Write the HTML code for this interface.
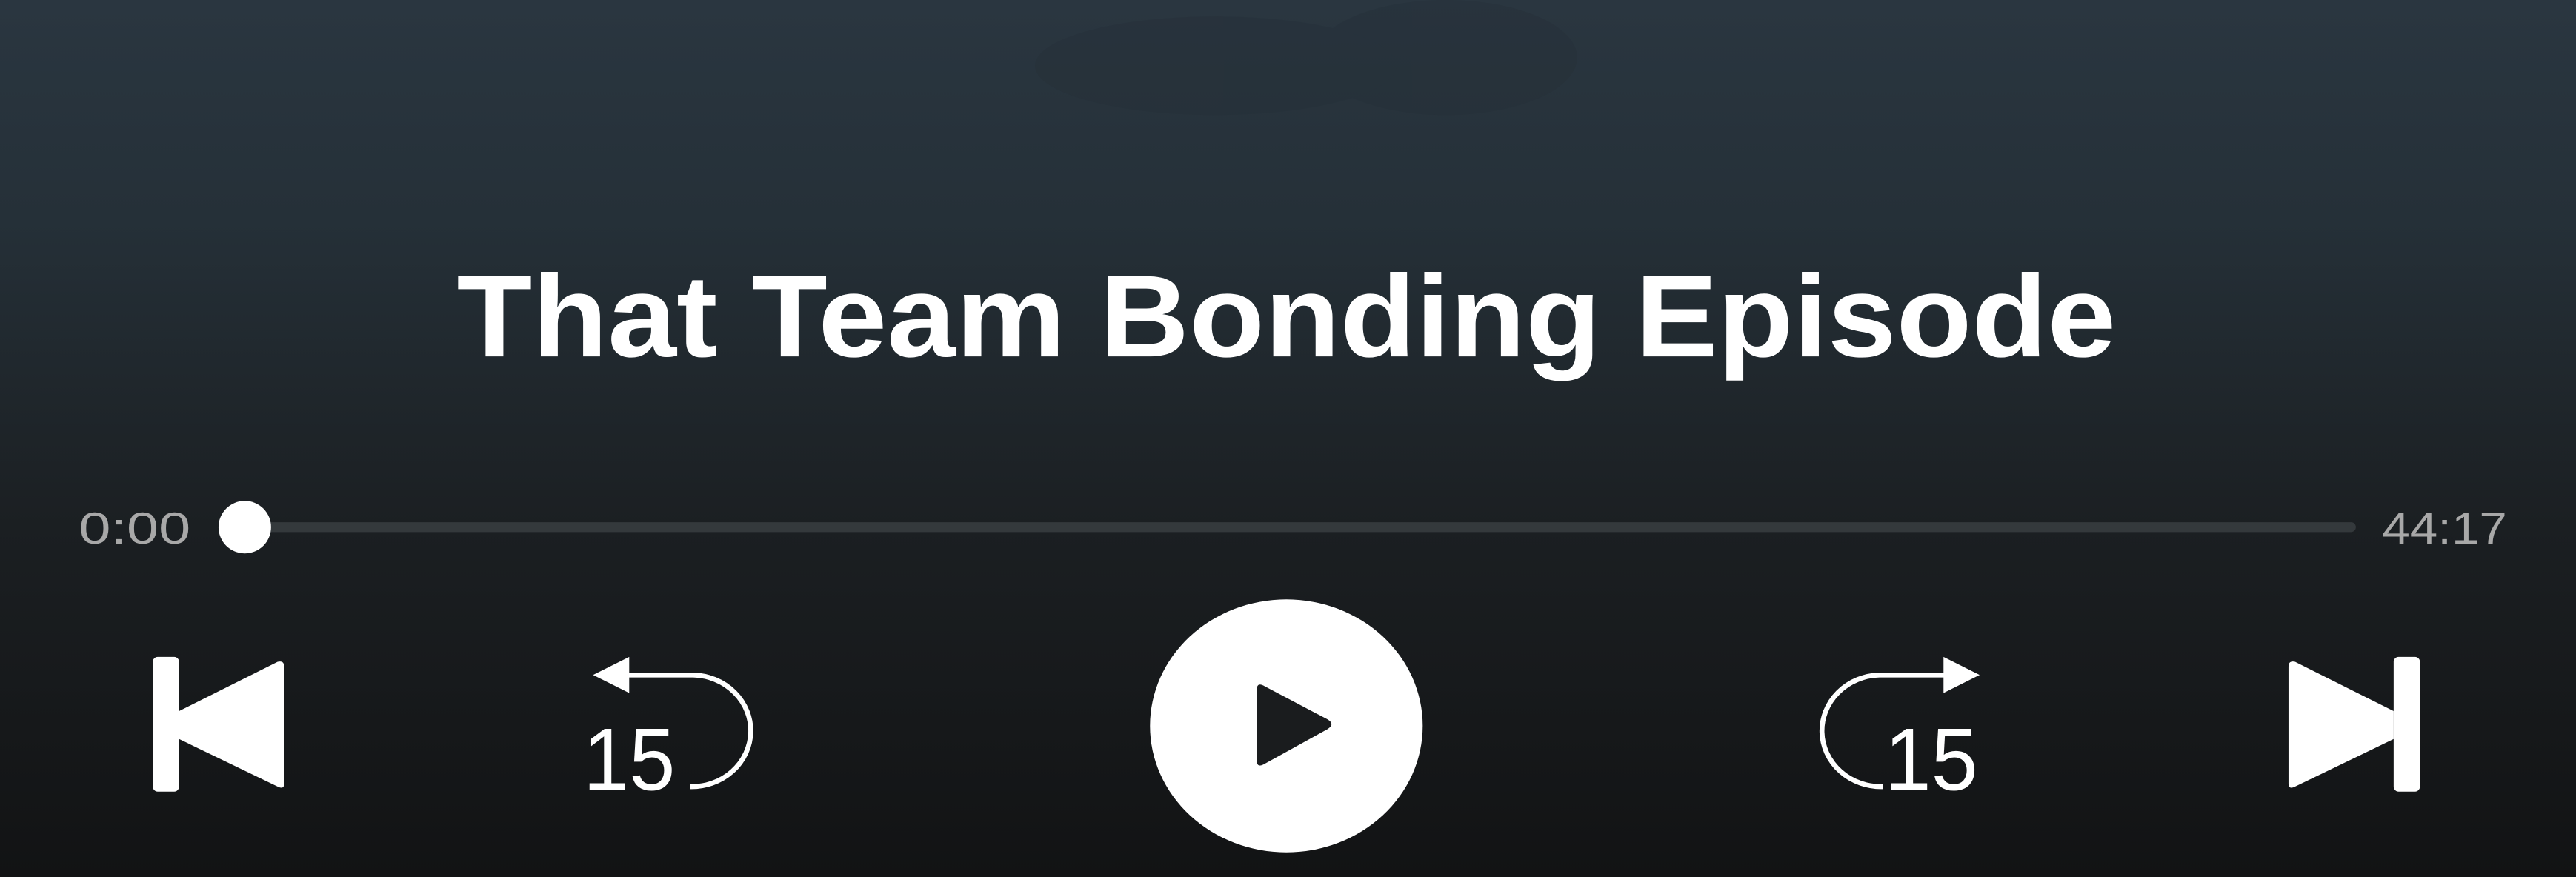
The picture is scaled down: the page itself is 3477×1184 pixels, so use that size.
<!DOCTYPE html>
<html><head><meta charset="utf-8"><style>
html,body{margin:0;padding:0;width:3477px;height:1184px;overflow:hidden;background:#151718}
svg{display:block}
</style></head><body>
<svg width="3477" height="1184" viewBox="0 0 1568 534" preserveAspectRatio="none" xmlns="http://www.w3.org/2000/svg">
<defs>
<linearGradient id="bg" x1="0" y1="0" x2="0" y2="1">
<stop offset="0" stop-color="#2a3640"/>
<stop offset="0.25" stop-color="#253038"/>
<stop offset="0.6" stop-color="#1b1f22"/>
<stop offset="1" stop-color="#121314"/>
</linearGradient>
</defs>
<rect width="1568" height="534" fill="url(#bg)"/>
<g fill="#222d35" opacity="0.25">
<ellipse cx="880" cy="35" rx="80" ry="35"/>
<ellipse cx="740" cy="40" rx="110" ry="30"/>
</g>
<text x="278" y="217" textLength="1010" lengthAdjust="spacingAndGlyphs" font-family="Liberation Sans, sans-serif" font-weight="bold" font-size="71" fill="#fff">That Team Bonding Episode</text>
<text x="48" y="331" textLength="68" lengthAdjust="spacingAndGlyphs" font-family="Liberation Sans, sans-serif" font-size="27" fill="#a8a8a8">0:00</text>
<text x="1450" y="331" textLength="76" lengthAdjust="spacingAndGlyphs" font-family="Liberation Sans, sans-serif" font-size="27" fill="#a8a8a8">44:17</text>
<line x1="160" y1="321" x2="1431" y2="321" stroke="#34393c" stroke-width="6" stroke-linecap="round"/>
<ellipse cx="149" cy="321" rx="16" ry="16" fill="#fff"/>
<rect x="93" y="400" width="16" height="82" rx="3" fill="#fff"/>
<path d="M109 433 L169 403 Q173 402 173 406 L173 477 Q173 481 169 479 L109 450 Z" fill="#fff"/>
<path d="M361 411 L383 400 L383 422 Z" fill="#fff"/>
<path d="M382 411 L422 411 A36 34 0 0 1 420 479" fill="none" stroke="#fff" stroke-width="3"/>
<text x="355" y="481" textLength="56" lengthAdjust="spacingAndGlyphs" font-family="Liberation Sans, sans-serif" font-size="54" fill="#fff">15</text>
<ellipse cx="783" cy="442" rx="83" ry="77" fill="#fff"/>
<path d="M765 420 Q765 415 770 418 L808 438 Q813 441 808 444 L770 465 Q765 468 765 463 Z" fill="#1a1c1e"/>
<path d="M1205 411 L1183 400 L1183 422 Z" fill="#fff"/>
<path d="M1184 411 L1144 411 A36 34 0 0 0 1146 479" fill="none" stroke="#fff" stroke-width="3"/>
<text x="1147" y="481" textLength="57" lengthAdjust="spacingAndGlyphs" font-family="Liberation Sans, sans-serif" font-size="54" fill="#fff">15</text>
<rect x="1457" y="400" width="16" height="82" rx="3" fill="#fff"/>
<path d="M1457 433 L1397 403 Q1393 402 1393 406 L1393 477 Q1393 481 1397 479 L1457 450 Z" fill="#fff"/>
</svg>
</body></html>
